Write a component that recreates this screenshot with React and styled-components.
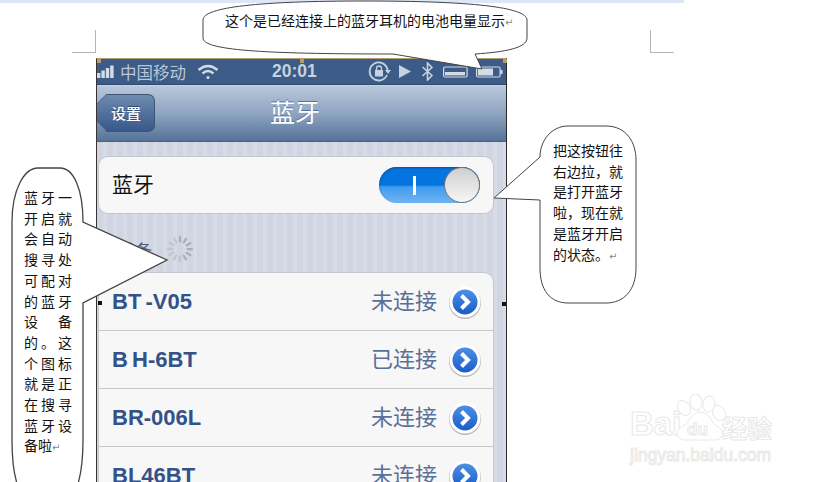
import styled, { createGlobalStyle } from "styled-components";

const Global = createGlobalStyle`
  html, body { margin: 0; padding: 0; background: #fff; }
  body { font-family: "Liberation Sans", "Noto Sans CJK SC", sans-serif; }
`;

const Page = styled.div`
  position: relative;
  width: 819px;
  height: 482px;
  overflow: hidden;
  background: #fff;
`;

const RulerBar = styled.div`
  width: 684px;
  height: 3px;
  background: #dce6f6;
`;

const Sheet = styled.div`
  padding: 55px 0 0 96px;
`;

/* the screenshot pasted in the document */
const Phone = styled.div`
  width: 409px;
  height: 424px;
  border-left: 1px solid #3a3230;
  border-right: 1px solid #2a2a2a;
  border-top: 1px solid #b39b72;
  display: flex;
  flex-direction: column;
  overflow: hidden;
`;

const StatusBar = styled.div`
  height: 25px;
  flex: none;
  display: flex;
  align-items: center;
  background: #3c5b86;
  color: #b9c7d9;
  border-bottom: 1px solid #2f4a70;
`;

const Carrier = styled.span`
  font: 16.5px "Noto Sans CJK SC", sans-serif;
  margin-left: 5px;
  width: 65px;
  white-space: nowrap;
`;

const Clock = styled.span`
  font: bold 17.5px "Liberation Sans", sans-serif;
  color: #c8d2df;
  margin-left: 53px;
  width: 96px;
`;

const StatusIcon = styled.svg`
  flex: none;
  margin-left: ${(p) => p.$gap || 0}px;
`;

const NavBar = styled.div`
  height: 57px;
  flex: none;
  display: flex;
  align-items: center;
  background: linear-gradient(#b8c7db, #8fa4c0 50%, #557299);
  border-top: 1px solid #c6d3e3;
  border-bottom: 1px solid #46608a;
  box-sizing: border-box;
`;

const BackButton = styled.div`
  position: relative;
  width: 49px;
  height: 38px;
  margin-left: 9px;
  flex: none;
  box-sizing: border-box;
  margin-top: -2px;
  display: flex;
  align-items: center;
  justify-content: center;
  color: #fff;
  font: 500 15px "Noto Sans CJK SC", sans-serif;
  text-shadow: 0 -1px 0 #2f4a70;
  background: linear-gradient(#6f8bb0, #37588a);
  border: 1px solid #3d5475;
  border-left: none;
  border-radius: 0 7px 7px 0;

  &::before {
    content: "";
    position: absolute;
    left: -13px;
    top: 4px;
    width: 27px;
    height: 27px;
    box-sizing: border-box;
    transform: rotate(45deg);
    background: linear-gradient(135deg, #6f8bb0, #37588a);
    border-left: 1px solid #3d5475;
    border-bottom: 1px solid #3d5475;
    border-bottom-left-radius: 4px;
  }
`;

const BackLabel = styled.span`
  position: relative;
  margin-left: -8px;
`;

const NavTitle = styled.div`
  margin: -4px 0 0 115px;
  color: #fff;
  font: 400 25px/1 "Noto Sans CJK SC", sans-serif;
  text-shadow: 0 -1px 0 #56719a;
`;

const Body = styled.div`
  flex: 1;
  padding: 14px 12px 0 1px;
  background: repeating-linear-gradient(90deg, #d0d5e1 0 6px, #d6dbe5 6px 10px);
`;

const Card = styled.div`
  background: #f7f7f7;
  border: 1px solid #c4c7cf;
  border-radius: 10px;
  box-sizing: border-box;
`;

const ToggleRow = styled(Card)`
  height: 58px;
  display: flex;
  align-items: center;
  justify-content: space-between;
  padding: 0 13px 0 13px;
  color: #111;
  font: 400 21px "Noto Sans CJK SC", sans-serif;
`;

const ToggleLabel = styled.span`
  padding-bottom: 4px;
`;

const Toggle = styled.div`
  position: relative;
  width: 101px;
  height: 36px;
  border-radius: 18px;
  background: linear-gradient(#0474de 50%, #3f9bee 55%, #70b5f2);
  display: flex;
  align-items: center;
  justify-content: flex-end;
  box-shadow: inset 0 1px 2px #0b4f9a;
`;

const ToggleMark = styled.span`
  position: absolute;
  left: 34px;
  top: 9px;
  width: 3px;
  height: 19px;
  background: #fff;
`;

const Knob = styled.div`
  width: 34px;
  height: 34px;
  border-radius: 50%;
  border: 1px solid #777;
  background: linear-gradient(#cfcfcf, #f6f6f6);
`;

const SectionHead = styled.div`
  height: 58px;
  box-sizing: border-box;
  display: flex;
  align-items: center;
  padding: 12px 0 0 20px;
  gap: 14px;
  color: #4d5a74;
  font: 400 17px "Noto Sans CJK SC", sans-serif;
`;

const DeviceList = styled(Card)``;

const DeviceRow = styled.div`
  height: ${(p) => (p.$first ? 57 : 58)}px;
  box-sizing: border-box;
  display: flex;
  align-items: center;
  padding: 0 11px 0 13px;
  border-top: ${(p) => (p.$first ? "none" : "1px solid #c9c9c9")};
`;

const DeviceName = styled.span`
  font: bold 22px "Liberation Sans", sans-serif;
  word-spacing: -2px;
  color: #33528a;
  flex: 1;
`;

const DeviceState = styled.span`
  font: 400 22px "Noto Sans CJK SC", sans-serif;
  color: #5a7098;
  margin-right: 11px;
  padding-bottom: 5px;
`;

const Overlay = styled.svg`
  position: absolute;
  left: 0;
  top: 0;
`;

const CalloutText = styled.div`
  position: absolute;
  left: ${(p) => p.$x}px;
  top: ${(p) => p.$y}px;
  width: ${(p) => p.$w}px;
  color: #111;
  font: 400 14px/20.7px "Noto Sans CJK SC", sans-serif;
`;

const ColumnLine = styled.div`
  text-align: ${(p) => (p.$last ? "left" : "justify")};
  text-align-last: ${(p) => (p.$last ? "left" : "justify")};
  white-space: nowrap;
`;

const Return = styled.span`
  color: #888;
  font: 10px "DejaVu Sans", sans-serif;
`;

const Handle = styled.div`
  position: absolute;
  left: ${(p) => p.$x}px;
  top: ${(p) => p.$y}px;
  width: ${(p) => p.$s}px;
  height: ${(p) => p.$s}px;
  background: ${(p) => p.$c};
`;

const CropMark = styled.div`
  position: absolute;
  left: ${(p) => p.$x}px;
  top: 30px;
  width: 23px;
  height: 22px;
  border-bottom: 1px solid #b5b5b5;
  ${(p) => (p.$right ? "border-left" : "border-right")}: 1px solid #b5b5b5;
`;

const Watermark = styled.div`
  position: absolute;
  left: 630px;
  top: 394px;
  width: 146px;
  height: 70px;
  color: transparent;
  -webkit-text-stroke: 1px #e8e8e8;
`;

const WmBrand = styled.div`
  display: flex;
  align-items: flex-end;
  height: 47px;
`;

const WmBai = styled.span`
  font: bold 33px/34px "Liberation Sans", sans-serif;
  width: 92px;
`;

const WmCn = styled.span`
  font: 700 25px/27px "Noto Sans CJK SC", sans-serif;
`;

const WmUrl = styled.div`
  font: 400 17.5px/22px "Liberation Sans", sans-serif;
  margin-top: 3px;
  white-space: nowrap;
`;

const WmDu = styled.span`
  position: absolute;
  left: 57px;
  top: 27px;
  font: bold 17px/18px "Liberation Sans", sans-serif;
`;

const devices = [
  ["BT -V05", "未连接"],
  ["B H-6BT", "已连接"],
  ["BR-006L", "未连接"],
  ["BL46BT", "未连接"],
];

const leftLines = [
  "蓝牙一", "开启就", "会自动", "搜寻处", "可配对", "的蓝牙",
  "设 备", "的。这", "个图标", "就是正", "在搜寻", "蓝牙设",
];

const rightLines = ["把这按钮往", "右边拉，就", "是打开蓝牙", "啦，现在就", "是蓝牙开启"];

function Signal() {
  return (
    <StatusIcon width="18" height="14" viewBox="0 0 18 14" fill="#d3dbe6">
      <rect x="0" y="8" width="3.4" height="5" />
      <rect x="4.4" y="5.5" width="3.4" height="7.5" />
      <rect x="8.8" y="3" width="3.4" height="10" />
      <rect x="13.2" y="0.5" width="3.4" height="12.5" />
    </StatusIcon>
  );
}

function Wifi() {
  return (
    <StatusIcon $gap={12} width="22" height="16" viewBox="0 0 22 16" fill="none" stroke="#d3dbe6" strokeWidth="2.4">
      <path d="M1.5 6 Q11 -2 20.5 6" />
      <path d="M5.5 9.5 Q11 4.5 16.5 9.5" />
      <circle cx="11" cy="13.5" r="1.6" fill="#d3dbe6" stroke="none" />
    </StatusIcon>
  );
}

function RotationLock() {
  return (
    <StatusIcon width="23" height="22" viewBox="0 0 23 22" fill="none" stroke="#c6d2e0" strokeWidth="1.8">
      <path d="M19 14 A9 9 0 1 1 19.6 9" />
      <path d="M17 9 L23 9 L20 13 Z" fill="#c6d2e0" stroke="none" />
      <rect x="7" y="9" width="8" height="6.5" fill="#c6d2e0" stroke="none" />
      <path d="M8.5 9 V7.5 A2.5 2.5 0 0 1 13.5 7.5 V9" strokeWidth="1.3" />
    </StatusIcon>
  );
}

function Play() {
  return (
    <StatusIcon $gap={7} width="14" height="15" viewBox="0 0 14 15" fill="#c6d2e0">
      <path d="M1 1 L13 7.5 L1 14 Z" />
    </StatusIcon>
  );
}

function Bluetooth() {
  return (
    <StatusIcon $gap={9} width="13" height="19" viewBox="0 0 13 19" fill="none" stroke="#c6d2e0" strokeWidth="1.6">
      <path d="M1.5 5 L11 13.5 L6.5 18 V1 L11 5.5 L1.5 14" />
    </StatusIcon>
  );
}

function Battery({ gap, level, nub }) {
  return (
    <StatusIcon $gap={gap} width="27" height="12" viewBox="0 0 27 12" fill="none" stroke="#d4dce6" strokeWidth="1.2">
      <rect x="0.6" y="1" width="23.5" height="10" rx="1.5" />
      {level}
      {nub && <rect x="24.5" y="4" width="2" height="4" fill="#d4dce6" stroke="none" />}
    </StatusIcon>
  );
}

function Spinner() {
  const ticks = Array.from({ length: 12 }, (_, i) => i * 30);
  return (
    <svg width="28" height="28" viewBox="-14 -14 28 28">
      {ticks.map((a, i) => (
        <rect
          key={a}
          x="-1"
          y="-13"
          width="2.2"
          height="6.5"
          rx="1"
          fill={i < 6 ? "#a9adb6" : "#c0c3cb"}
          transform={`rotate(${a})`}
        />
      ))}
    </svg>
  );
}

function Chevron() {
  return (
    <svg width="34" height="34" viewBox="0 0 34 34">
      <defs>
        <linearGradient id="disc" x1="0" y1="0" x2="0" y2="1">
          <stop offset="0" stopColor="#4d90e6" />
          <stop offset="1" stopColor="#1a5cc8" />
        </linearGradient>
      </defs>
      <circle cx="17" cy="18" r="16" fill="#8d8d8d" opacity="0.6" />
      <circle cx="17" cy="17" r="15.5" fill="#fff" />
      <circle cx="17" cy="17" r="12.5" fill="url(#disc)" />
      <path d="M13.5 10.5 L20 17 L13.5 23.5" fill="none" stroke="#fff" strokeWidth="4" />
    </svg>
  );
}

function Paw() {
  return (
    <Overlay width="146" height="70" viewBox="0 0 146 70" fill="#fff" stroke="#e8e8e8" strokeWidth="1">
      <ellipse cx="54" cy="14" rx="6" ry="8" transform="rotate(-35 54 14)" />
      <ellipse cx="66" cy="8" rx="6" ry="8" transform="rotate(-8 66 8)" />
      <ellipse cx="79" cy="10" rx="6" ry="8" transform="rotate(10 79 10)" />
      <ellipse cx="89" cy="19" rx="6" ry="8" transform="rotate(-25 89 19)" />
      <path d="M70 18 C80 18 82 30 88 33 C96 38 92 46 84 46 H56 C46 46 44 37 52 33 C60 29 60 18 70 18 Z" />
    </Overlay>
  );
}

export default function App() {
  return (
    <Page>
      <Global />
      <RulerBar />
      <Sheet>
        <Phone>
          <StatusBar>
            <Signal />
            <Carrier>中国移动</Carrier>
            <Wifi />
            <Clock>20:01</Clock>
            <RotationLock />
            <Play />
            <Bluetooth />
            <Battery gap={9} level={<rect x="2" y="6" width="20" height="3.4" fill="#d4dce6" stroke="none" />} />
            <Battery gap={6} nub level={<rect x="2" y="2.5" width="15" height="7" fill="#d4dce6" stroke="none" />} />
          </StatusBar>
          <NavBar>
            <BackButton><BackLabel>设置</BackLabel></BackButton>
            <NavTitle>蓝牙</NavTitle>
          </NavBar>
          <Body>
            <ToggleRow>
              <ToggleLabel>蓝牙</ToggleLabel>
              <Toggle>
                <ToggleMark />
                <Knob />
              </Toggle>
            </ToggleRow>
            <SectionHead>
              设备
              <Spinner />
            </SectionHead>
            <DeviceList>
              {devices.map(([name, state], i) => (
                <DeviceRow key={name} $first={i === 0}>
                  <DeviceName>{name}</DeviceName>
                  <DeviceState>{state}</DeviceState>
                  <Chevron />
                </DeviceRow>
              ))}
            </DeviceList>
          </Body>
        </Phone>
      </Sheet>

      <CropMark $x={72} />
      <CropMark $x={650} $right />

      <Handle $x={97} $y={59} $s={4} $c="#b39b72" />
      <Handle $x={300} $y={59} $s={4} $c="#b39b72" />
      <Handle $x={503} $y={59} $s={4} $c="#b39b72" />
      <Handle $x={98} $y={301} $s={4} $c="#111" />
      <Handle $x={502} $y={302} $s={4} $c="#111" />

      <Watermark>
        <Paw />
        <WmBrand>
          <WmBai>Bai</WmBai>
          <WmCn>经验</WmCn>
        </WmBrand>
        <WmDu>du</WmDu>
        <WmUrl>jingyan.baidu.com</WmUrl>
      </Watermark>

      <Overlay width="819" height="482" viewBox="0 0 819 482" fill="#fff" stroke="#444" strokeWidth="1">
        <path d="M203 20 C203 7 260 1 365 1 C470 1 527 7 527 20 V38 C527 48 505 52 475 54 L482 69 L393 54 C260 54 203 50 203 38 Z" />
        <path d="M38 168 H60 C74 168 83 190 83 222 L167 260 L83 303 V440 C83 470 78 490 70 500 H26 C16 490 12 470 12 440 V222 C12 190 24 168 38 168 Z" strokeWidth="1.3" />
        <path d="M568 126 H606 C626 126 636 142 636 160 V268 C636 290 624 303 606 303 H568 C550 303 540 290 540 268 V200 L494 198 L540 157 C540 140 552 126 568 126 Z" />
      </Overlay>

      <CalloutText $x={225} $y={10} $w={295}>
        这个是已经连接上的蓝牙耳机的电池电量显示<Return>↵</Return>
      </CalloutText>
      <CalloutText $x={24} $y={187} $w={48}>
        {leftLines.map((line) => (
          <ColumnLine key={line}>{line}</ColumnLine>
        ))}
        <ColumnLine $last>备啦<Return>↵</Return></ColumnLine>
      </CalloutText>
      <CalloutText $x={553} $y={140} $w={70}>
        {rightLines.map((line) => (
          <ColumnLine key={line}>{line}</ColumnLine>
        ))}
        <ColumnLine $last>的状态。<Return>↵</Return></ColumnLine>
      </CalloutText>
    </Page>
  );
}
